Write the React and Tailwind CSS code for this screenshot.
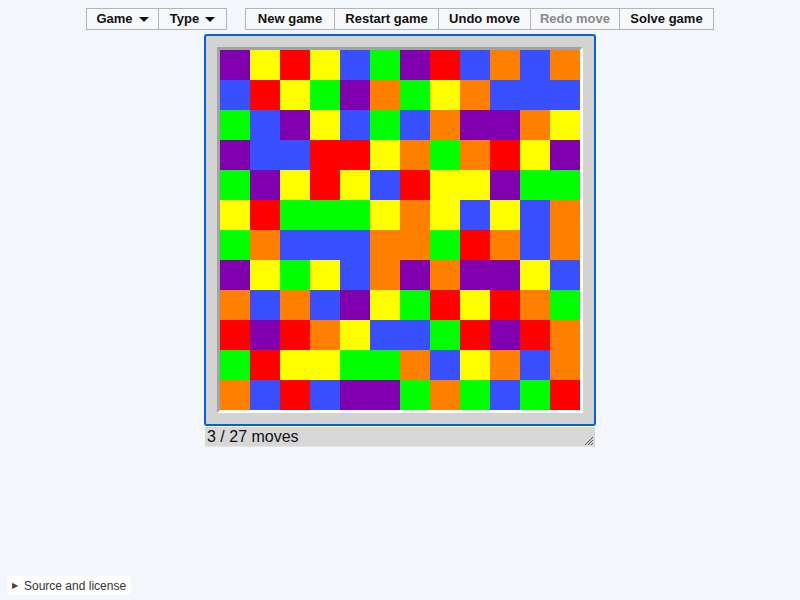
import React from "react";

const COLORS = {
  P: "bg-[#8000b0]",
  Y: "bg-[#ffff00]",
  R: "bg-[#ff0000]",
  B: "bg-[#3850ff]",
  G: "bg-[#00ff00]",
  O: "bg-[#ff8000]",
};

const GRID = [
  "PYRYBGPRBOBO",
  "BRYGPOGYOBBB",
  "GBPYBGBOPPOY",
  "PBBRRYOGORYP",
  "GPYRYBRYYPGG",
  "YRGGGYOYBYBO",
  "GOBBBOOGROBO",
  "PYGYBOPOPPYB",
  "OBOBPYGRYROG",
  "RPROYBBGRPRO",
  "GRYYGGOBYOBO",
  "OBRBPPGOGBGR",
];

function Caret() {
  return (
    <svg width="10" height="6" viewBox="0 0 10 6" className="ml-[6px] mt-[2px]">
      <path d="M0 0 L10 0 L5 5 Z" fill="#111" />
    </svg>
  );
}

function Btn({ w, children, disabled, first }) {
  return (
    <button
      className={`h-[22px] ${w} flex items-center justify-center border border-[#b4b4b4] bg-[#f7f8fa] text-[13px] font-bold ${
        first ? "" : "-ml-px"
      } ${disabled ? "text-[#8a8a8a]" : "text-[#111]"}`}
    >
      {children}
    </button>
  );
}

export default function App() {
  return (
    <div className="min-h-[600px] bg-[#f3f6fb] flex flex-col items-center font-['Liberation_Sans',Arial,sans-serif]">
      {/* TOOLBAR */}
      <div className="flex mt-[8px] gap-[18px]">
        <div className="flex">
          <Btn w="w-[73px]" first>
            Game <Caret />
          </Btn>
          <Btn w="w-[69px]">
            Type <Caret />
          </Btn>
        </div>
        <div className="flex">
          <Btn w="w-[90px]" first>New game</Btn>
          <Btn w="w-[105px]">Restart game</Btn>
          <Btn w="w-[93px]">Undo move</Btn>
          <Btn w="w-[90px]" disabled>Redo move</Btn>
          <Btn w="w-[95px]">Solve game</Btn>
        </div>
      </div>

      {/* PUZZLE */}
      <div className="mt-[4px] w-[392px] border-2 border-[#0a62cf] rounded-[3px] bg-[#d3d3d3] p-[11px]">
        <div className="border-[3px] border-t-[#a3a3a3] border-l-[#a3a3a3] border-r-white border-b-white">
          <div className="grid grid-cols-12">
            {GRID.map((row, r) =>
              row.split("").map((c, i) => (
                <div key={`${r}-${i}`} className={`w-[30px] h-[30px] ${COLORS[c]}`} />
              ))
            )}
          </div>
        </div>
      </div>

      {/* STATUS */}
      <div className="mt-px w-[390px] h-[20px] bg-[#d7d7d7] border-b border-[#e4e4e4] flex items-center justify-between pl-[2px] pr-[2px]">
        <span className="text-[16px] text-[#111] leading-none">3 / 27 moves</span>
        <svg width="8" height="8" viewBox="0 0 8 8" className="self-end mb-[1px]">
          <path d="M8 0 L0 8 M8 3 L3 8 M8 6 L6 8" stroke="#555" strokeWidth="1" />
        </svg>
      </div>

      {/* FOOTER */}
      <div className="mt-auto self-start ml-[7px] mb-[5px] h-[19px] px-[5px] bg-white rounded-[4px] flex items-center text-[12px] text-[#333]">
        <span className="text-[8px] mr-[6px] text-[#444]">▶</span>
        Source and license
      </div>
    </div>
  );
}
